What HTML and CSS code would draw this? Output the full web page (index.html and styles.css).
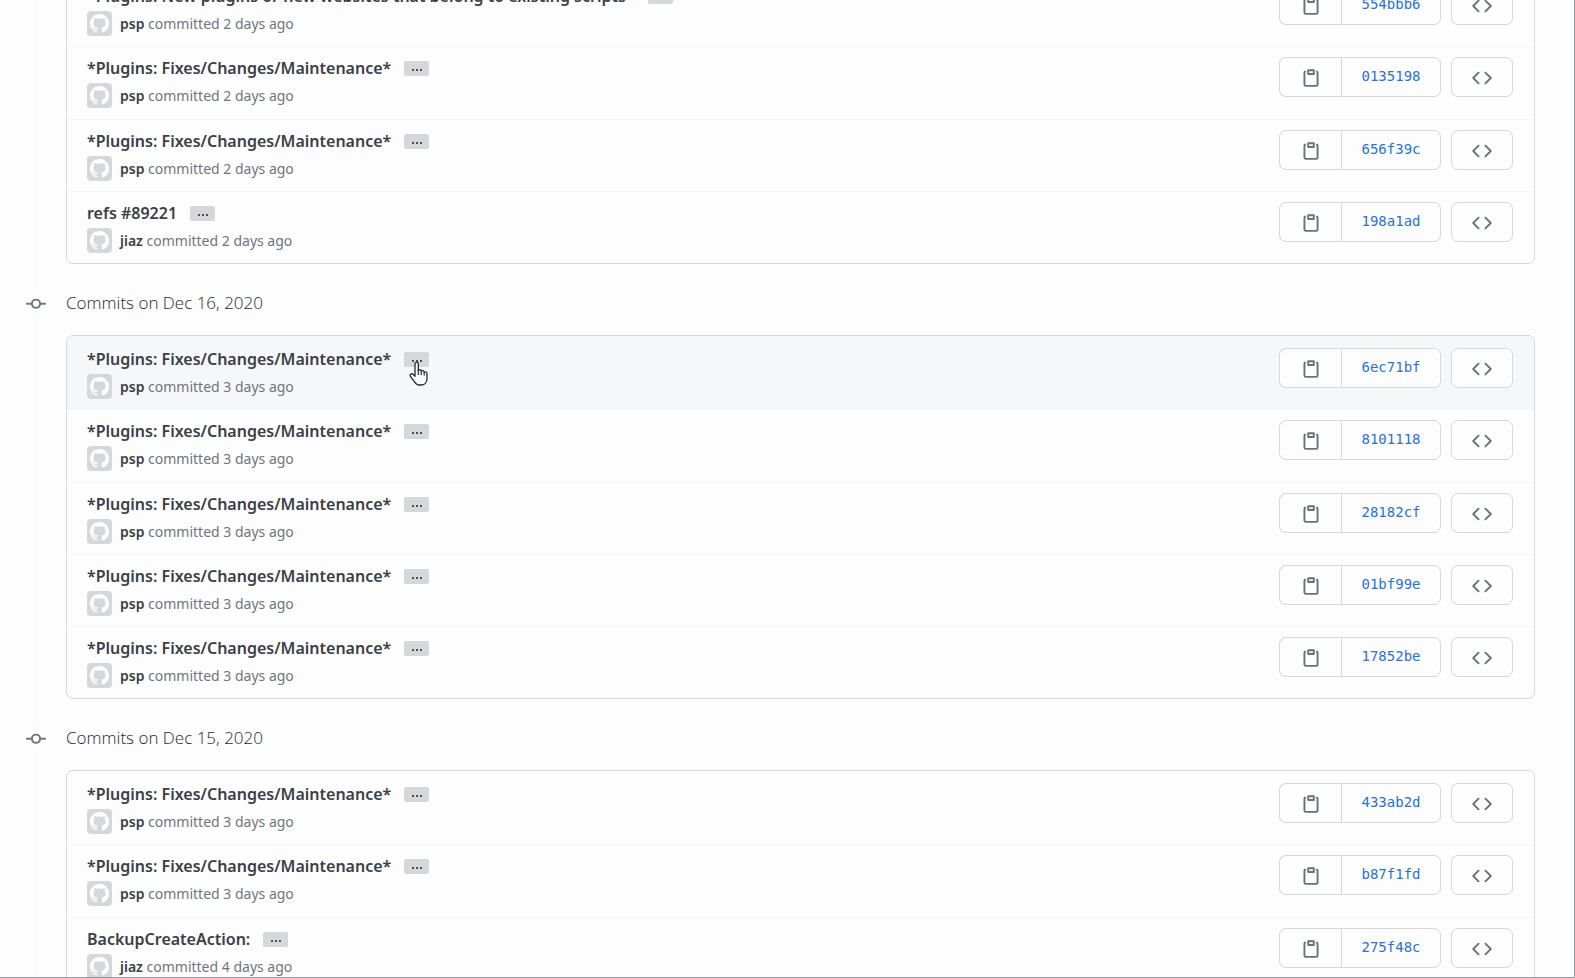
FILE: index.html
```
<!DOCTYPE html>
<html lang="en">
<head>
<meta charset="utf-8">
<title>Commits</title>
<link rel="stylesheet" href="styles.css">
</head>
<body>
<svg class="sprite" aria-hidden="true">
  <symbol id="clip" viewBox="0 0 16 16"><path d="M5.75 1a.75.75 0 00-.75.75v3c0 .414.336.75.75.75h4.5a.75.75 0 00.75-.75v-3a.75.75 0 00-.75-.75h-4.5zm.75 3V2.5h3V4h-3zm-2.874-.467a.75.75 0 00-.752-1.298A1.75 1.75 0 002 3.75v9.5c0 .966.784 1.75 1.75 1.75h8.5A1.75 1.75 0 0014 13.25v-9.5a1.75 1.75 0 00-.874-1.515.75.75 0 10-.752 1.298.25.25 0 01.126.217v9.5a.25.25 0 01-.25.25h-8.5a.25.25 0 01-.25-.25v-9.5a.25.25 0 01.126-.217z"/></symbol>
  <symbol id="code" viewBox="0 0 16 16"><path d="M4.72 3.22a.75.75 0 011.06 1.06L2.06 8l3.72 3.72a.75.75 0 11-1.06 1.06L.47 8.53a.75.75 0 010-1.06l4.25-4.25zm6.56 0a.75.75 0 10-1.06 1.06L13.94 8l-3.72 3.72a.75.75 0 101.06 1.06l4.25-4.25a.75.75 0 000-1.06l-4.25-4.25z"/></symbol>
  <symbol id="commit" viewBox="0 0 16 16"><path fill-rule="evenodd" d="M10.5 7.75a2.5 2.5 0 11-5 0 2.5 2.5 0 015 0zm1.43.75a4.002 4.002 0 01-7.86 0H.75a.75.75 0 110-1.5h3.32a4.001 4.001 0 017.86 0h3.32a.75.75 0 110 1.5h-3.32z"/></symbol>
  <symbol id="mark" viewBox="0 0 16 16"><path d="M8 0C3.58 0 0 3.58 0 8c0 3.54 2.29 6.53 5.47 7.59.4.07.55-.17.55-.38 0-.19-.01-.82-.01-1.49-2.01.37-2.53-.49-2.69-.94-.09-.23-.48-.94-.82-1.13-.28-.15-.68-.52-.01-.53.63-.01 1.08.58 1.23.82.72 1.21 1.87.87 2.33.66.07-.52.28-.87.51-1.07-1.78-.2-3.64-.89-3.64-3.95 0-.87.31-1.59.82-2.15-.08-.2-.36-1.02.08-2.12 0 0 .67-.21 2.2.82.64-.18 1.32-.27 2-.27.68 0 1.36.09 2 .27 1.53-1.04 2.2-.82 2.2-.82.44 1.1.16 1.92.08 2.12.51.56.82 1.27.82 2.15 0 3.07-1.87 3.75-3.65 3.95.29.25.54.73.54 1.48 0 1.07-.01 1.93-.01 2.2 0 .21.15.46.55.38A8.013 8.013 0 0016 8c0-4.42-3.58-8-8-8z"/></symbol>
</svg>
<main class="page">
  <div class="timeline" id="timeline"></div>
</main>
<script src="app.js"></script>
</body>
</html>
```
FILE: styles.css
```
* { box-sizing: border-box; }

body {
  margin: 0;
  background: #fdfdfd;
  color: #3a4047;
  font-family: "Noto Sans", "Open Sans", sans-serif;
}

.sprite { display: none; }

.page {
  height: 100vh;
  overflow: hidden;
  border-right: 1px solid #96989b;
  border-bottom: 1px solid #96989b;
}

/* The list is scrolled part of the way down its first group */
.timeline {
  margin-top: -28px;
  padding: 0 39px 0 25px;
  background: linear-gradient(#f7f7f7, #f7f7f7) 36px 0 / 1px 100% no-repeat;
}

.day {
  display: flex;
  align-items: center;
  gap: 19px;
  height: 71px;
  padding-top: 7px;
}

.day-icon {
  width: 22px;
  height: 26px;
  padding: 4px 1px 2px;
  background: #fdfdfd;
  fill: #6f757c;
}

.day-title {
  margin: 0;
  font-family: "Open Sans", "Noto Sans", sans-serif;
  font-size: 17px;
  font-weight: 300;
  line-height: 24px;
  color: #24292e;
}

.commits {
  list-style: none;
  margin: 0 0 0 41px;
  padding: 0;
  border: 1px solid #d5d7d9;
  border-radius: 7px;
  background: #fdfdfd;
  overflow: hidden;
}

.commit {
  display: flex;
  justify-content: space-between;
  align-items: flex-start;
  height: 72px;
  padding: 10px 21px 0 20px;
  border-bottom: 1px solid #f5f5f5;
}

.commit:first-child {
  height: 74px;
  padding-top: 12px;
}

.commit:nth-child(2) { height: 73px; }

.commit:last-child {
  height: 71px;
  border-bottom: 0;
}

.commit.active { background: #f6f7f9; }

.title-line {
  display: flex;
  align-items: center;
  gap: 13px;
  height: 22px;
}

.title {
  font-size: 16px;
  font-weight: 600;
  color: #3a4047;
  text-decoration: none;
  white-space: nowrap;
}

.more {
  position: relative;
  display: flex;
  align-items: center;
  justify-content: center;
  gap: 2px;
  width: 25px;
  height: 15px;
  padding: 3px 0 0;
  border: 0;
  border-radius: 2px;
  background: #d6d7d9;
}

.more i {
  width: 2px;
  height: 2px;
  background: #4b5057;
}

.cursor {
  position: absolute;
  left: 5px;
  top: 9px;
  width: 19px;
  height: 25px;
}

.meta {
  display: flex;
  align-items: center;
  gap: 8px;
  margin-top: 4px;
  font-size: 14px;
  line-height: 25px;
  color: #6f757c;
}

.avatar {
  width: 25px;
  height: 25px;
  padding: 3px;
  border-radius: 4px;
  background: #d6d7d9;
  fill: #fdfdfd;
}

.author {
  font-weight: 600;
  color: #3a4047;
  text-decoration: none;
}

.actions {
  display: flex;
  gap: 10px;
}

.group { display: flex; }

.btn {
  display: flex;
  align-items: center;
  justify-content: center;
  width: 62px;
  height: 40px;
  padding: 2px 0 0;
  border: 1px solid #d5d7d9;
  border-radius: 7px;
  background: #fdfdfd;
  fill: #6a7077;
}

.btn svg {
  width: 20px;
  height: 20px;
}

.copy { border-radius: 7px 0 0 7px; border-right: 0; }

.hash {
  width: 100px;
  padding: 0 0 2px;
  border-radius: 0 7px 7px 0;
  font-family: "DejaVu Sans Mono", monospace;
  font-size: 14px;
  color: #2a72cf;
  text-decoration: none;
}
```
FILE: app.js
```
const fixes = "*Plugins: Fixes/Changes/Maintenance*";
const groups = [
  { commits: [
    ["*Plugins: New plugins or new websites that belong to existing scripts*", "psp", "2 days ago", "554bbb6"],
    [fixes, "psp", "2 days ago", "0135198"],
    [fixes, "psp", "2 days ago", "656f39c"],
    ["refs #89221", "jiaz", "2 days ago", "198a1ad"]
  ] },
  { day: "Dec 16, 2020", commits: [
    [fixes, "psp", "3 days ago", "6ec71bf", true],
    [fixes, "psp", "3 days ago", "8101118"],
    [fixes, "psp", "3 days ago", "28182cf"],
    [fixes, "psp", "3 days ago", "01bf99e"],
    [fixes, "psp", "3 days ago", "17852be"]
  ] },
  { day: "Dec 15, 2020", commits: [
    [fixes, "psp", "3 days ago", "433ab2d"],
    [fixes, "psp", "3 days ago", "b87f1fd"],
    ["BackupCreateAction:", "jiaz", "4 days ago", "275f48c"]
  ] }
];

const icon = (name, cls = "") => `<svg class="${cls}" aria-hidden="true"><use href="#${name}"/></svg>`;

const pointer = `<svg class="cursor" viewBox="0 0 19 25" aria-hidden="true"><path d="M6 14V3.200C6 .4 9.300.4 9.300 3.200V9.500C9.800 8 12 8.300 12.200 10.200C13 9 15 9.400 15.200 11.200C16.300 10.400 18 11 18 13V17.500C18 21.500 15.500 24 12 24H10.500C8 24 6.800 22.800 5.500 20.800L1.300 15.200C.5 13.600 2.500 12 4 13.200L6 15.300Z" fill="#fff" stroke="#222933" stroke-width="1.300" stroke-linejoin="round"/><path d="M9.300 9V14M12.200 10.200V14M15.200 11.200V14.500" fill="none" stroke="#222933" stroke-width="1.200"/></svg>`;

const row = ([title, author, when, hash, active]) => `
  <li class="commit${active ? " active" : ""}">
    <div>
      <div class="title-line">
        <a class="title" href="#${hash}">${title}</a>
        <button class="more" type="button" aria-label="Show description"><i></i><i></i><i></i>${active ? pointer : ""}</button>
      </div>
      <div class="meta">${icon("mark", "avatar")}<span><a class="author" href="#${author}">${author}</a> committed ${when}</span></div>
    </div>
    <div class="actions">
      <div class="group">
        <button class="btn copy" type="button" aria-label="Copy hash">${icon("clip")}</button>
        <a class="btn hash" href="#${hash}">${hash}</a>
      </div>
      <a class="btn" href="#tree-${hash}" aria-label="Browse code">${icon("code")}</a>
    </div>
  </li>`;

document.getElementById("timeline").innerHTML = groups.map(g => `
  ${g.day ? `<div class="day">${icon("commit", "day-icon")}<h2 class="day-title">Commits on ${g.day}</h2></div>` : ""}
  <ol class="commits">${g.commits.map(row).join("")}</ol>`).join("");
```
